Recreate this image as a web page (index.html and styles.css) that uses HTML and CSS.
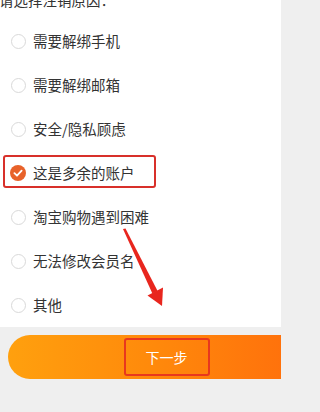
FILE: index.html
```html
<!DOCTYPE html>
<html lang="zh">
<head>
<meta charset="utf-8">
<link rel="stylesheet" href="styles.css">
</head>
<body>
<div class="screen">
  <div class="card">
    <div class="title">请选择注销原因：</div>
    <ul class="options">
      <li class="option"><span class="radio"></span><span class="label">需要解绑手机</span></li>
      <li class="option"><span class="radio"></span><span class="label">需要解绑邮箱</span></li>
      <li class="option"><span class="radio"></span><span class="label">安全/隐私顾虑</span></li>
      <li class="option selected">
        <span class="radio checked"><svg viewBox="0 0 16 16" width="16" height="16"><circle cx="8" cy="8" r="8" fill="#e8622a"/><path d="M4.4 8.2 L7 10.7 L11.6 5.6" fill="none" stroke="#fff" stroke-width="1.8" stroke-linecap="round" stroke-linejoin="round"/></svg></span>
        <span class="label">这是多余的账户</span>
        <span class="highlight"></span>
      </li>
      <li class="option"><span class="radio"></span><span class="label">淘宝购物遇到困难</span></li>
      <li class="option"><span class="radio"></span><span class="label">无法修改会员名</span></li>
      <li class="option"><span class="radio"></span><span class="label">其他</span></li>
    </ul>
  </div>
  <div class="actions">
    <div class="next-btn"><span class="next-label">下一步</span></div>
  </div>
  <svg class="arrow" width="284" height="412" viewBox="0 0 284 412">
    <polygon points="123,229 125.5,228.5 157.6,291 152.4,293.6" fill="#e8261e"/>
    <polygon points="162,306 147.5,295.5 163,287.5" fill="#e8261e"/>
  </svg>
</div>
</body>
</html>
```
FILE: styles.css
```css
* { box-sizing: border-box; }
html, body {
  margin: 0;
  padding: 0;
  background: #efefef;
}
body {
  font-family: "Noto Sans CJK SC", "Noto Sans", sans-serif;
  color: #333;
  width: 284px;
  height: 412px;
  overflow: hidden;
}
.screen {
  position: relative;
  width: 281px;
  height: 412px;
  overflow: hidden;
}
.card {
  background: #fff;
  margin-top: -10px;
  padding-bottom: 0;
}
.title {
  font-size: 14.5px;
  line-height: 20px;
  height: 20px;
  padding-left: 0;
  margin-left: -1px;
  margin-bottom: 9px;
}
.options {
  list-style: none;
  margin: 0;
  padding: 0;
}
.option {
  position: relative;
  display: flex;
  align-items: center;
  height: 44px;
  padding-left: 11px;
  font-size: 14.5px;
}
.radio {
  width: 15px;
  height: 15px;
  border: 1px solid #d9d9d9;
  border-radius: 50%;
  flex: none;
  margin-right: 7px;
}
.radio.checked {
  border: none;
  width: 16px;
  height: 16px;
  margin-left: -1px;
  margin-right: 7px;
  display: flex;
}
.label {
  line-height: 20px;
}
.highlight {
  position: absolute;
  left: 3px;
  top: 4px;
  width: 153px;
  height: 33px;
  border: 2px solid #d8302a;
  border-radius: 3px;
}
.actions {
  padding: 8px 0 0 8px;
}
.next-btn {
  width: 313px;
  height: 44px;
  border-radius: 22px;
  background: linear-gradient(90deg, #ffa00e 0%, #ff8a0b 45%, #ff6b0c 100%);
  display: flex;
  align-items: center;
  justify-content: center;
}
.next-label {
  color: #fff;
  font-size: 14px;
  line-height: 20px;
  padding: 7px 20px;
  border: 2px solid #e8381e;
  border-radius: 3px;
  margin-left: 4px;
}
.arrow {
  position: absolute;
  left: 0;
  top: 0;
  pointer-events: none;
}
```
